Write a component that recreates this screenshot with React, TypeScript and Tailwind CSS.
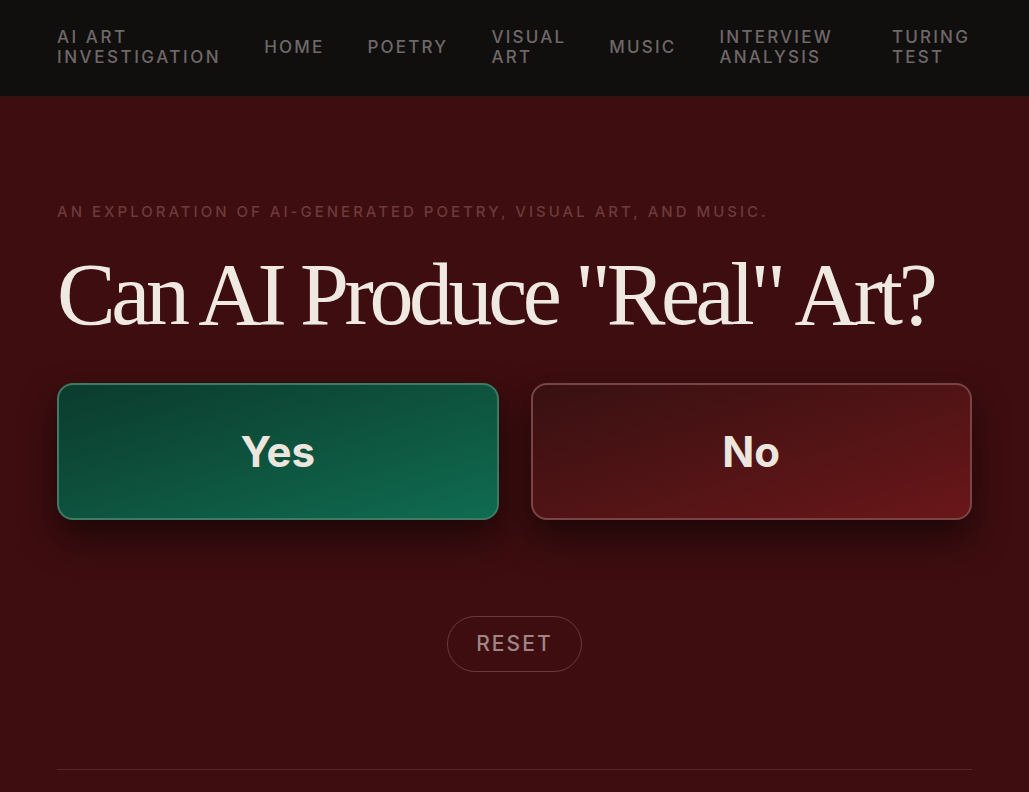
import React from 'react';

const navItems = [
  ['HOME'],
  ['POETRY'],
  ['VISUAL', 'ART'],
  ['MUSIC'],
  ['INTERVIEW', 'ANALYSIS'],
  ['TURING', 'TEST'],
];

export default function App() {
  return (
    <div className="min-h-screen bg-[#3d0d0f] font-['Inter','Liberation_Sans',sans-serif]">
      {/* Top navigation */}
      <header className="h-[97px] bg-[#100f0e] border-b border-[#2a1414]">
        <nav className="h-full px-[57px] pb-[3px] flex items-center gap-[43px]">
          <div className="text-[17px] leading-[20px] tracking-[0.15em] text-[#6f6868] font-medium">
            <div>AI ART</div>
            <div>INVESTIGATION</div>
          </div>
          {navItems.map((item, index) => (
            <a
              key={item.join(' ')}
              href="#"
              className={`text-[17px] leading-[20px] tracking-[0.13em] text-[#6f6868] font-medium ${
                index === navItems.length - 1 ? 'ml-[16px]' : ''
              }`}
            >
              {item.map((line) => (
                <div key={line}>{line}</div>
              ))}
            </a>
          ))}
        </nav>
      </header>

      <main className="px-[57px] pt-[106px]">
        {/* Intro */}
        <p className="text-[15px] leading-[18px] tracking-[0.2em] text-[#6e3a3b] font-medium">
          AN EXPLORATION OF AI-GENERATED POETRY, VISUAL ART, AND MUSIC.
        </p>
        <h1 className="mt-[24px] text-[#efe9e1] text-[88px] leading-[100px] tracking-[-0.05em] font-['Liberation_Serif','Times_New_Roman',serif]">
          Can AI Produce "Real" Art?
        </h1>

        {/* Answer buttons */}
        <div className="mt-[38px] grid grid-cols-2 gap-[32px]">
          <button className="h-[137px] rounded-[16px] border-2 border-[#3f7a65] bg-gradient-to-br from-[#0b3b2d] to-[#0f6c50] text-[#ece6df] text-[42px] font-bold shadow-[0_18px_34px_rgba(0,0,0,0.5)]">
            Yes
          </button>
          <button className="h-[137px] rounded-[16px] border-2 border-[#7a4446] bg-gradient-to-br from-[#381011] to-[#6a1619] text-[#ece6df] text-[42px] font-bold shadow-[0_18px_34px_rgba(0,0,0,0.5)]">
            No
          </button>
        </div>

        {/* Reset */}
        <div className="mt-[96px] flex justify-center">
          <button className="h-[56px] px-[28px] rounded-full border border-[#6c3a3b] text-[#a08585] text-[21px] tracking-[0.1em] font-medium">
            RESET
          </button>
        </div>

        <hr className="mt-[97px] border-t border-[#5a2526]" />
      </main>
    </div>
  );
}
